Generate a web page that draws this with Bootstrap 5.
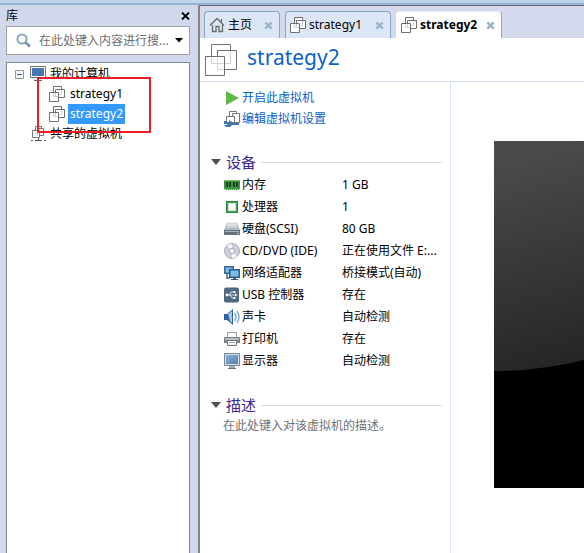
<!DOCTYPE html>
<html lang="zh-CN">
<head>
<meta charset="utf-8">
<meta name="viewport" content="width=device-width, initial-scale=1">
<title>strategy2</title>
<link href="https://cdn.jsdelivr.net/npm/bootstrap@5.3.0/dist/css/bootstrap.min.css" rel="stylesheet">
<style>
body{font-family:"Noto Sans","Noto Sans CJK SC",sans-serif;font-size:12px;line-height:20px;color:#000;background:#d4d9ee}
svg{flex:none;display:block}
.top-strip{height:5px;background:#bfd5ec;border-bottom:2px solid #95b3d4}
.library{width:200px;padding:0 8px 0 6px;border-right:2px solid #85827f;background:#d2d8ec}
.library-head{height:21px;line-height:21px}
.plain-btn{border:0;background:none;padding:0;color:inherit;line-height:inherit}
.search-box{height:29px;border:1px solid #a2a2a2;background:#fff;padding:0 6px 0 9px;margin-bottom:7px}
.search-box input{font-size:12px;color:#000;line-height:20px}
.search-box input::placeholder{color:#6e6e6e;opacity:1}
.tree{border:1px solid #7f8690;border-bottom:0;background:#fff;padding:1px 0 0 8px}
.tree-row{height:20px}
.vm-list{padding-left:34px}
.vm-list .plain-btn{padding:0 2px;margin-left:3px}
.vm-list .picked{background:#3399ff;color:#fff}
.callout-frame{left:30px;top:14px;width:114px;height:56px;border:2px solid #ee1c24;pointer-events:none}
.workspace{background:#fff;border-top:1px solid #6e696b}
.tab-strip{background:#d4d9ee;height:32px;padding:5px 4px 0 4px;gap:5px}
.tab-item{height:27px;width:106px;padding:0 6px 0 4px;border:1px solid #89a5bf;border-bottom:0;border-radius:4px 4px 0 0;background:#dce7f5}
.tab-item a{margin-left:3px}
.tab-home{width:76px}
.tab-item.current{background:#fff;border-left-color:#fff;border-top-color:#e7edf6}
.tab-item.current a{font-weight:700}
.vm-head{height:44px;border-bottom:1px solid #d7e1ef;padding:0 5px}
.vm-title{font-size:21px;line-height:30px;color:#0a61cc;font-weight:400;margin:0 0 6px 10px}
.details{width:251px;border-right:1px solid #d6e4f3;padding:5px 8px 0 11px}
.actions{padding-left:13px}
.actions a{color:#0a61cc;height:21px}
.item-line{gap:2px}
.section-head{margin-top:22px;gap:5px}
.section-title{font-size:15px;line-height:22px;color:#3b2a9c;font-weight:400}
.rule{height:1px;background:#dcdcdc}
.devices{table-layout:fixed;margin-top:1px}
.devices th,.devices td{height:22px;padding:0;line-height:22px;font-weight:400}
.devices th{width:118px}
.note{padding-left:12px;color:#707070}
.preview{padding:59px 0 0 43px}
</style>
</head>
<body>
<svg width="0" height="0" class="position-absolute" aria-hidden="true">
<symbol id="vm" viewBox="0 0 16 16"><g fill="#fff" stroke="#707070"><path d="M4.500.5h8v9h-8z"/><path d="M6.500 3.500h9v8h-9z"/><path d="M.5 6.500h9v9h-9z"/></g><path d="M4.500 7v3.500H9M6.500 7v4M10 8.500h2.500V4" fill="none" stroke="#cdd4df"/></symbol>
<symbol id="x" viewBox="0 0 9 9"><path d="M1.300 1.300l6.400 6.400M7.700 1.300L1.300 7.700" stroke="#9bb5cf" stroke-width="2.500"/></symbol>
<linearGradient id="g-steel" x2="0" y2="1"><stop stop-color="#eef1f4"/><stop offset="1" stop-color="#9aa6b2"/></linearGradient>
<linearGradient id="g-screen" x2="1" y2="1"><stop stop-color="#8fb0d2"/><stop offset="1" stop-color="#5580ad"/></linearGradient>
</svg>
<div class="d-flex flex-column min-vh-100 overflow-hidden">
<div class="top-strip"></div>
<div class="d-flex flex-grow-1">
<aside class="library d-flex flex-column flex-shrink-0">
<div class="library-head d-flex justify-content-between align-items-center"><span>库</span>
<button class="plain-btn" aria-label="关闭库"><svg width="9" height="8" viewBox="0 0 9 8"><path d="M1 .5l7 7M8 .5l-7 7" stroke="#000" stroke-width="1.800"/></svg></button></div>
<div class="search-box d-flex align-items-center">
<svg width="15" height="15" viewBox="0 0 15 15" fill="none"><circle cx="6" cy="6" r="4.600" stroke="#8ba6c1" stroke-width="2"/><path d="M9.500 9.500l4.500 4" stroke="#7190ae" stroke-width="2.500"/></svg>
<input type="text" class="form-control border-0 shadow-none rounded-0 bg-transparent p-0 ms-2" aria-label="搜索" placeholder="在此处键入内容进行搜...">
<button class="plain-btn" aria-label="搜索选项"><svg width="8" height="5"><path d="M0 0h8L4 4.500z"/></svg></button>
</div>
<div class="tree flex-grow-1 position-relative">
<ul class="list-unstyled mb-0">
<li><div class="tree-row d-flex align-items-center"><button class="plain-btn" aria-label="折叠"><svg width="9" height="9"><path d="M.5.5h8v8h-8z" fill="#f5f5f5" stroke="#969696"/><path d="M2 4.500h5" stroke="#365fae"/></svg></button>
<svg class="mx-1" width="18" height="16"><path d="M2.500.5h15v11h-15z" fill="#fff" stroke="#65717c"/><path d="M4 2h12v8H4z" fill="#4677b2"/><path d="M9 12h2v2h3v1H6v-1h3z" fill="#60696f"/></svg><button class="plain-btn">我的计算机</button></div>
<ul class="vm-list list-unstyled mb-0">
<li class="tree-row d-flex align-items-center"><svg width="16" height="16"><use href="#vm"/></svg><button class="plain-btn">strategy1</button></li>
<li class="tree-row d-flex align-items-center"><svg width="16" height="16"><use href="#vm"/></svg><button class="plain-btn picked">strategy2</button></li>
</ul></li>
<li class="tree-row d-flex align-items-center ps-3"><svg class="me-1" width="15" height="16"><g fill="#fff" stroke="#777"><path d="M4.500.5h6v7h-6z"/><path d="M6.500 2.500h6v7h-6z"/><path d="M1.500 4.500h7v7h-7z"/></g><path d="M4 7.500h3M6.500 5v5" stroke="#c5cdd9"/><path d="M7.500 12v3M0 14.500h2M4 14.500h7M13 14.500h2" stroke="#555"/></svg><button class="plain-btn">共享的虚拟机</button></li>
</ul>
<div class="callout-frame position-absolute"></div>
</div>
</aside>
<main class="workspace flex-grow-1 d-flex flex-column overflow-hidden">
<nav class="tab-strip d-flex">
<div class="tab-item tab-home d-flex align-items-center"><svg width="16" height="16"><path d="M3.500 8v6.500h3.500v-5h3v5h3.500V8M1 8.500L8 1.500l7 7M12.500 5V2" fill="none" stroke="#6b6b6b" stroke-width="1.300"/></svg><a href="#" class="text-reset text-decoration-none me-auto">主页</a><button class="plain-btn" aria-label="关闭"><svg width="9" height="9"><use href="#x"/></svg></button></div>
<div class="tab-item d-flex align-items-center"><svg width="16" height="16"><use href="#vm"/></svg><a href="#" class="text-reset text-decoration-none me-auto">strategy1</a><button class="plain-btn" aria-label="关闭"><svg width="9" height="9"><use href="#x"/></svg></button></div>
<div class="tab-item current d-flex align-items-center"><svg width="16" height="16"><use href="#vm"/></svg><a href="#" class="text-reset text-decoration-none me-auto">strategy2</a><button class="plain-btn" aria-label="关闭"><svg width="9" height="9"><use href="#x"/></svg></button></div>
</nav>
<header class="vm-head d-flex align-items-center"><svg width="32" height="32" viewBox="0 0 32 32"><g fill="#fff" stroke="#707070"><path d="M6.500.5h19v19h-19z"/><path d="M12.500 6.500h19v19h-19z"/><path d="M.5 12.500h19v19H.5z"/></g><path d="M6.500 13.500v6h12M12.500 13.500v12h6M20 19.500h5.500v-12" fill="none" stroke="#cbd3df"/></svg><h1 class="vm-title">strategy2</h1></header>
<div class="d-flex flex-grow-1">
<section class="details flex-shrink-0">
<div class="actions">
<a href="#" class="item-line d-flex align-items-center text-decoration-none"><svg width="16" height="14"><path d="M2 0l13 7-13 7z" fill="#5fb946"/></svg>开启此虚拟机</a>
<a href="#" class="item-line d-flex align-items-center text-decoration-none"><svg width="16" height="16"><g fill="#fff" stroke="#777"><path d="M5.500.5h7v7h-7z"/><path d="M8.500 2.500h7v9h-7z"/><path d="M2.500 5.500h8v6h-8z"/></g><path d="M0 10h3v2h2V9l3 2v1h7v2H8l-2 2H2L0 14h3v-1H0z" fill="#3e75b3"/></svg>编辑虚拟机设置</a>
</div>
<div class="section-head d-flex align-items-center"><svg width="10" height="6"><path d="M0 0h10L5 6z" fill="#505050"/></svg><h2 class="section-title mb-0">设备</h2><div class="rule flex-grow-1"></div></div>
<div class="actions">
<table class="devices w-100"><tbody>
<tr><th scope="row"><div class="item-line d-flex align-items-center"><svg width="16" height="16"><path d="M0 3h16v9h-1v1H1v-1H0z" fill="#3a963d"/><path d="M0 3h16v1H0z" fill="#7cc070"/><path d="M2 5h2v5H2zM5 5h2v5H5zM9 5h2v5H9zM12 5h2v5h-2z" fill="#244127"/><path d="M1 12.500h14" stroke="#d7c971" stroke-dasharray="1 1"/></svg>内存</div></th><td>1 GB</td></tr>
<tr><th scope="row"><div class="item-line d-flex align-items-center"><svg width="16" height="16"><path d="M2 2h12v12H2z" fill="#23843c"/><path d="M3 3h10v10H3z" fill="#4fae5d"/><path d="M4 4h8v8H4z" fill="#cfd6d1"/><path d="M5 5h6v6H5z" fill="#fff"/></svg>处理器</div></th><td>1</td></tr>
<tr><th scope="row"><div class="item-line d-flex align-items-center"><svg width="16" height="16"><path d="M3 2h10l3 8H0z" fill="url(#g-steel)" stroke="#a0a9b3" stroke-width=".5"/><path d="M0 9h16v5H0z" fill="#65717f"/><path d="M1 10h14v1H1z" fill="#aab4bf"/><path d="M13 12h2v1h-2z" fill="#8fe36b"/></svg>硬盘(SCSI)</div></th><td>80 GB</td></tr>
<tr><th scope="row"><div class="item-line d-flex align-items-center"><svg width="16" height="16"><circle cx="8" cy="8" r="7.500" fill="#cbd0da" stroke="#a3a9b4"/><path d="M8 8L3 2.500A7 7 0 0 1 8 1zM8 8l5 5.500A7 7 0 0 1 8 15z" fill="#f4f5f8"/><circle cx="8" cy="8" r="2.500" fill="#fff" stroke="#9da3b0"/></svg>CD/DVD (IDE)</div></th><td class="text-truncate">正在使用文件 E:...</td></tr>
<tr><th scope="row"><div class="item-line d-flex align-items-center"><svg width="16" height="16"><path d="M0 1h10v8H0z" fill="#3a6994"/><path d="M1.500 2.500h7v5h-7z" fill="#80b9e5"/><path d="M3 9v4h3" fill="none" stroke="#486b8f" stroke-width="1.500"/><path d="M5 4h11v9H5z" fill="#2d5c87"/><path d="M6.500 5.500h8v6h-8z" fill="#73bdf0"/><path d="M9 13h3v1h2v1H7v-1h2z" fill="#345d82"/></svg>网络适配器</div></th><td>桥接模式(自动)</td></tr>
<tr><th scope="row"><div class="item-line d-flex align-items-center"><svg width="16" height="16"><rect width="15" height="15" y=".5" rx="2" fill="#4d6881"/><path d="M2 8h10M5 8l2-3h3M6 8l2 3h2" fill="none" stroke="#fff" stroke-width=".8"/><circle cx="3" cy="8" r="1.400" fill="#fff"/><path d="M11 6.500l2.500 1.500-2.500 1.500zM9.500 4h2v2h-2zM9.500 10h2v2h-2z" fill="#fff"/></svg>USB 控制器</div></th><td>存在</td></tr>
<tr><th scope="row"><div class="item-line d-flex align-items-center"><svg width="16" height="16"><path d="M0 5h3l6-5v16l-6-5H0z" fill="#2f639a"/><path d="M4 5l4-3v12l-2-2z" fill="#a9c9e5"/><path d="M10.500 4q3 4 0 8M13 2q4 6 0 12" fill="none" stroke="#79abd6" stroke-width="1.400"/></svg>声卡</div></th><td>自动检测</td></tr>
<tr><th scope="row"><div class="item-line d-flex align-items-center"><svg width="16" height="16"><path d="M3.500 1.500h9v5h-9z" fill="#fff" stroke="#999"/><path d="M0 6h16v6H0z" fill="#7a7f86"/><path d="M1 7h14v2H1z" fill="#b5b9be"/><path d="M3.500 9.500h9v5h-9z" fill="#fff" stroke="#777"/><path d="M5 11.500h6" stroke="#aaa"/></svg>打印机</div></th><td>存在</td></tr>
<tr><th scope="row"><div class="item-line d-flex align-items-center"><svg width="16" height="16"><path d="M.5.5h15v12H.5z" fill="#d3dce4" stroke="#74899c"/><path d="M2 2h12v9H2z" fill="url(#g-screen)"/><path d="M5 13h6v2H5z" fill="#a0abb3"/><path d="M4 15.500h8" stroke="#66727c"/></svg>显示器</div></th><td>自动检测</td></tr>
</tbody></table>
</div>
<div class="section-head d-flex align-items-center"><svg width="10" height="6"><path d="M0 0h10L5 6z" fill="#505050"/></svg><h2 class="section-title mb-0">描述</h2><div class="rule flex-grow-1"></div></div>
<p class="note mb-0">在此处键入对该虚拟机的描述。</p>
</section>
<section class="preview flex-grow-1 overflow-hidden"><svg width="462" height="347"><defs><linearGradient id="shine" gradientUnits="userSpaceOnUse" x1="0" y1="20" x2="60" y2="230"><stop stop-color="#4b4b4b"/><stop offset="1" stop-color="#252525"/></linearGradient></defs><path d="M0 0h462v347H0z"/><path d="M0 0V230Q230 230 462-60z" fill="url(#shine)"/></svg></section>
</div>
</main>
</div>
</div>
<script src="https://cdn.jsdelivr.net/npm/bootstrap@5.3.0/dist/js/bootstrap.bundle.min.js"></script>
</body>
</html>
